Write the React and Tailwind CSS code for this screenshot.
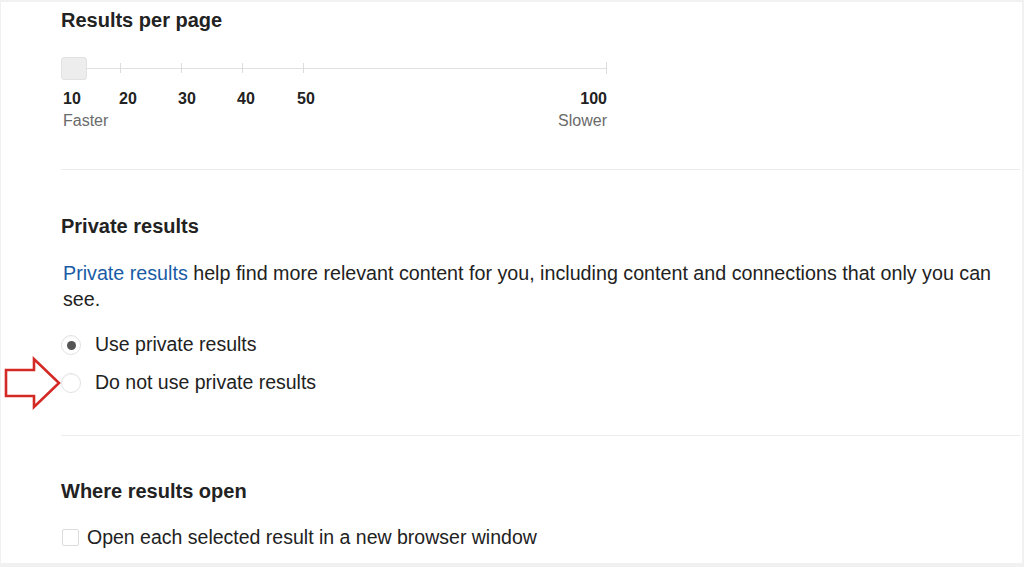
import React, { useState } from "react";

const TICKS = [
  { label: "10", x: 2 },
  { label: "20", x: 58 },
  { label: "30", x: 117 },
  { label: "40", x: 176 },
  { label: "50", x: 236 },
];

function RedArrow() {
  return (
    <svg width="60" height="54" viewBox="0 0 60 54" className="shrink-0">
      <path
        d="M3 14 H31 V3 L56 27 L31 51 V40 H3 Z"
        fill="none"
        stroke="#d42a25"
        strokeWidth="2.6"
        strokeLinejoin="miter"
      />
    </svg>
  );
}

function Radio({ checked, onClick, label }) {
  return (
    <label className="flex items-center h-[38px] cursor-pointer" onClick={onClick}>
      <span className="w-[20px] h-[20px] rounded-full border border-[#e2e2e2] bg-white flex items-center justify-center shadow-[inset_0_1px_1px_rgba(0,0,0,0.04)]">
        {checked && <span className="w-[9px] h-[9px] rounded-full bg-[#555]" />}
      </span>
      <span className="ml-[14px] text-[19.5px] text-[#222]">{label}</span>
    </label>
  );
}

export default function App() {
  const [priv, setPriv] = useState(true);
  const [newWin, setNewWin] = useState(false);

  return (
    <div
      className="w-[1024px] h-[567px] bg-white overflow-hidden border-t-2 border-l border-r-2 border-b-4 border-[#f1f1f1]"
      style={{ fontFamily: '"Liberation Sans", Arial, sans-serif' }}
    >
      <div className="pl-[60px] pr-[2px]">
        {/* Results per page */}
        <section className="pb-[37px] border-b border-[#ececec]">
          <h2 className="pt-[6px] text-[20px] font-bold text-[#222] leading-[24px]">
            Results per page
          </h2>
          <div className="mt-[24px] w-[546px]">
            <div className="relative h-[24px] flex items-center">
              <div className="w-[26px] h-[23px] rounded-[3px] bg-[#ededed] border border-[#e2e2e2] shrink-0" />
              <div className="flex-1 h-px bg-[#e0e0e0]" />
              {[59, 120, 181, 242].map((x) => (
                <div key={x} className="absolute top-[7px] w-px h-[10px] bg-[#dcdcdc]" style={{ left: x }} />
              ))}
              <div className="absolute right-0 top-[6px] w-px h-[12px] bg-[#dcdcdc]" />
            </div>
            <div className="relative mt-[7px] h-[20px] text-[16px] font-bold text-[#222]">
              {TICKS.map((t) => (
                <span key={t.label} className="absolute top-0" style={{ left: t.x }}>
                  {t.label}
                </span>
              ))}
              <span className="absolute right-0 top-0">100</span>
            </div>
            <div className="mt-[3px] flex justify-between text-[16px] text-[#6a6a6a] leading-[22px] pl-[2px]">
              <span>Faster</span>
              <span>Slower</span>
            </div>
          </div>
        </section>

        {/* Private results */}
        <section className="pt-[44px] pb-[33px] border-b border-[#ececec]">
          <h2 className="text-[20px] font-bold text-[#222] leading-[24px]">Private results</h2>
          <p className="mt-[22px] pl-[2px] text-[19.7px] text-[#222] leading-[26px] pr-[28px]">
            <a href="#" className="text-[#1a5ba6]">Private results</a> help find more relevant content
            for you, including content and connections that only you can see.
          </p>
          <div className="mt-[14px] flex flex-col">
            <Radio checked={priv} onClick={() => setPriv(true)} label="Use private results" />
            <div className="relative">
              <div className="absolute left-[-58px] top-[-8px]">
                <RedArrow />
              </div>
              <Radio checked={!priv} onClick={() => setPriv(false)} label="Do not use private results" />
            </div>
          </div>
        </section>

        {/* Where results open */}
        <section className="pt-[43px]">
          <h2 className="text-[20px] font-bold text-[#222] leading-[24px]">Where results open</h2>
          <label className="mt-[20px] flex items-center cursor-pointer" onClick={() => setNewWin(!newWin)}>
            <span className="ml-[1px] w-[17px] h-[17px] rounded-[2px] border border-[#dcdcdc] bg-white flex items-center justify-center text-[12px]">
              {newWin ? "✓" : ""}
            </span>
            <span className="ml-[8px] text-[19.5px] text-[#222]">
              Open each selected result in a new browser window
            </span>
          </label>
        </section>
      </div>
    </div>
  );
}
